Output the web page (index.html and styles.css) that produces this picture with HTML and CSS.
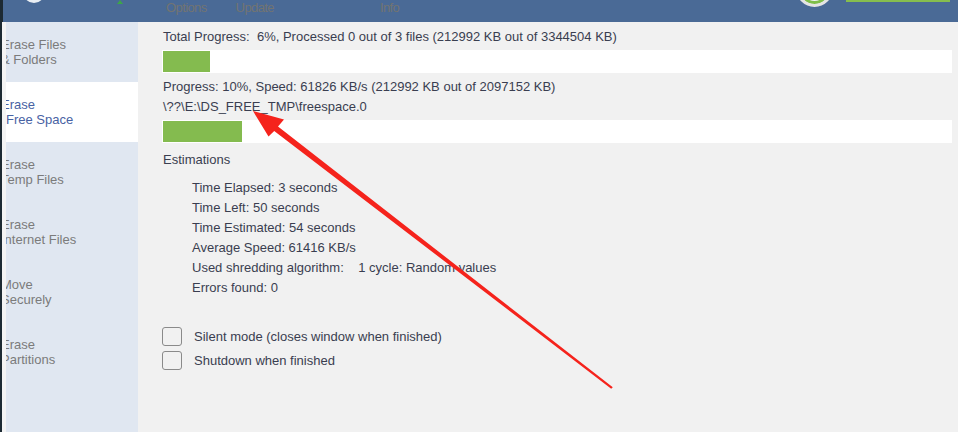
FILE: index.html
```html
<!DOCTYPE html>
<html lang="en">
<head>
	<meta charset="UTF-8">
	<title>Erase Free Space</title>
	<link rel="stylesheet" href="styles.css">
</head>
<body>
	<div class="top">
		<div class="logo"></div>
		<div class="leaf"></div>
		<div class="tabs">
			<span class="tab t1">Options</span>
			<span class="tab t2">Update</span>
			<span class="tab t3">Info</span>
		</div>
		<div class="ring"></div>
		<div class="buy"></div>
	</div>
	<div class="wrap">
		<div class="edge"></div>
		<ul class="side">
			<li>Erase Files<br>&amp; Folders</li>
			<li class="on">Erase<br>Free Space</li>
			<li>Erase<br>Temp Files</li>
			<li>Erase<br>Internet Files</li>
			<li>Move<br>Securely</li>
			<li>Erase<br>Partitions</li>
		</ul>
		<div class="main">
			<p class="line">Total Progress:&nbsp; 6%, Processed 0 out of 3 files (212992 KB out of 3344504 KB)</p>
			<div class="bar b1"><div class="fill" style="width:47px"></div></div>
			<p class="line l2">Progress: 10%, Speed: 61826 KB/s (212992 KB out of 2097152 KB)</p>
			<p class="line">\??\E:\DS_FREE_TMP\freespace.0</p>
			<div class="bar b2"><div class="fill" style="width:79px"></div></div>
			<p class="line est">Estimations</p>
			<ul class="stats">
				<li>Time Elapsed: 3 seconds</li>
				<li>Time Left: 50 seconds</li>
				<li>Time Estimated: 54 seconds</li>
				<li>Average Speed: 61416 KB/s</li>
				<li>Used shredding algorithm:&nbsp;&nbsp;&nbsp; 1 cycle: Random values</li>
				<li>Errors found: 0</li>
			</ul>
			<div class="opts">
				<label class="chk"><span class="box"></span>Silent mode (closes window when finished)</label>
				<label class="chk"><span class="box"></span>Shutdown when finished</label>
			</div>
		</div>
	</div>
	<svg class="arrow" width="958" height="432" viewBox="0 0 958 432">
		<polygon fill="#f5231c" points="253,111 284,119.5 278,126.5 612.8,387.3 611.2,388.7 274.2,131 268.5,136.5"/>
	</svg>
</body>
</html>
```

FILE: styles.css
```css
*{padding: 0; margin: 0; list-style: none; box-sizing: border-box;}
body{ width: 958px; height: 432px; overflow: hidden; background: #f1f1f1; font-family: "Liberation Sans", Arial, sans-serif; font-size: 13px; color: #3a3e50; position: relative;}

.top{ height: 22px; background: #4a6a96; display: flex; align-items: flex-start; overflow: hidden; border-left: 3px solid #1d2a33;}
.logo{ width: 22px; height: 22px; margin: -19px 0 0 20px; border-radius: 50%; background: #d9863a; border: 5px solid #e9eef3;}
.leaf{ width: 0; height: 0; margin: 0 0 0 72px; border-left: 3px solid transparent; border-right: 3px solid transparent; border-bottom: 4px solid #3da54a;}
.tabs{ display: flex; margin-left: 43px; padding-top: 1px;}
.tab{ font-size: 13px; color: #727472; line-height: 14px; letter-spacing: -0.6px;}
.t2{ margin-left: 29px;}
.t3{ margin-left: 106px;}
.ring{ width: 37px; height: 37px; margin: -30px 0 0 397px; border-radius: 50%; background: #f3f3f3; border: 3px solid #e4e4e4; box-shadow: inset 0 0 0 3px #7fbf4a;}
.buy{ width: 104px; height: 2px; margin-left: 13px; background: #86bd4e;}

.wrap{ display: flex; height: 410px;}
.edge{ width: 6px; background: #f4f4f4; border-left: 2px solid #1d2a33;}
.side{ width: 132px; background: #e0e7f1; overflow: hidden;}
.side li{ height: 60px; display: flex; align-items: center; margin-left: -5px; line-height: 15px; color: #7b7b7b;}
.side li.on{ background: #fff; color: #4862a3; margin-left: 0; text-indent: -5px; display: block; padding-top: 15px;}

.main{ flex: 1; padding: 5px 6px 0 24px;}
.line{ line-height: 20px; margin-left: 1px;}
.bar{ height: 23px; background: #fff; padding: 1px; margin-top: 3px;}
.fill{ height: 21px; background: #84bb4f;}
.l2{ margin-top: 4px;}
.b2{ margin-top: 3px;}
.est{ margin-top: 7px;}
.stats{ margin: 8px 0 0 30px;}
.stats li{ line-height: 20px;}
.opts{ margin-top: 28px; display: flex; flex-direction: column; gap: 4px;}
.chk{ display: flex; align-items: center; height: 20px;}
.box{ width: 20px; height: 19px; border: 1px solid #8a8a8a; border-radius: 3px; margin-right: 12px;}

.arrow{ position: absolute; left: 0; top: 0; pointer-events: none;}
```
